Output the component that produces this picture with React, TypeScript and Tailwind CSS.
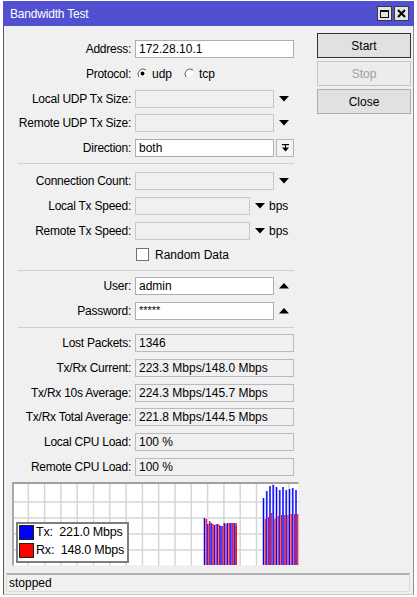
import React from "react";

const Down = () => (
  <svg width="10" height="6" viewBox="0 0 10 6" className="block">
    <path d="M0 0H10L5 5.5Z" fill="#000" />
  </svg>
);
const Up = () => (
  <svg width="10" height="6" viewBox="0 0 10 6" className="block">
    <path d="M0 5.5H10L5 0Z" fill="#000" />
  </svg>
);

const Radio = ({ checked }: { checked?: boolean }) => (
  <svg width="11" height="11" viewBox="0 0 11 11" className="block">
    <circle cx="5.5" cy="5.5" r="5" fill="#fff" />
    <path d="M9 2 A5 5 0 0 0 2 9" fill="none" stroke="#5a5a5a" strokeWidth="1" />
    <path d="M2 9 A5 5 0 0 0 9 2" fill="none" stroke="#e4e4e4" strokeWidth="1" />
    {checked && <circle cx="5.5" cy="5.5" r="2" fill="#000" />}
  </svg>
);

function Row({ label, children }: { label: string; children: React.ReactNode }) {
  return (
    <div className="flex items-center h-[18px]">
      <div className="w-[127px] text-right whitespace-nowrap tracking-[-0.25px]">{label}</div>
      <div className="ml-[4px] flex items-center h-[18px]">{children}</div>
    </div>
  );
}

const white = "h-[18px] bg-white border border-[#abadb3] pl-[3px] flex items-center";
const disabled = "h-[18px] bg-[#f0f0f0] border border-[#c9c9c9]";
const stat = "h-[18px] w-[159px] bg-[#f0f0f0] border border-[#bababa] pl-[3px] flex items-center";

const Sep = ({ cls }: { cls: string }) => (
  <div className={"ml-[14px] w-[276px] h-px bg-[#cdcdcd] " + cls} />
);

const c1Blue = [518, 524, 523, 525, 524, 526, 523, 523, 523, 523];
const c1Red = [519, 521, 524, 524, 525, 526, 524, 523, 523, 523];
const c2Blue = [498, 491, 486, 485, 487, 490, 487, 490, 489, 488, 490];
const c2Red = [519, 517, 513, 519, 516, 515, 515, 515, 514, 514, 514];

function Graph() {
  const vlines: number[] = [];
  for (let k = 1; k <= 17; k++) vlines.push(12 + 16.3 * k);
  const hlines = [502, 518, 534, 550];
  const bottom = 565;
  const bars: React.ReactNode[] = [];
  const addPair = (x: number, bt: number, rt: number, key: string) => {
    bars.push(<rect key={key + "bl"} x={x - 0.5} y={bt} width={2} height={bottom - bt} fill="#8080ff" />);
    bars.push(<rect key={key + "b"} x={x} y={bt} width={1} height={bottom - bt} fill="#0000ff" />);
    bars.push(<rect key={key + "rl"} x={x + 1.5} y={rt} width={1.8} height={bottom - rt} fill="#ff8080" />);
    bars.push(<rect key={key + "r"} x={x + 1.8} y={rt} width={1} height={bottom - rt} fill="#ff0000" />);
  };
  c1Blue.forEach((b, i) => addPair(204 + 3.3 * i, b, c1Red[i], "a" + i));
  bars.push(<rect key="lastred" x={235.5} y={526} width={1.2} height={bottom - 526} fill="#ff0000" />);
  c2Blue.forEach((b, i) => addPair(263 + 3.25 * i, b, c2Red[i], "c" + i));
  return (
    <div className="relative ml-[8px] mt-[6px] w-[288px] h-[85px]">
      <svg width="288" height="85" viewBox="0 0 288 85" className="block">
        <g transform="translate(-12,-482)">
          <rect x="12" y="482" width="288" height="85" fill="#fff" />
          {vlines.map((x, i) => (
            <line key={"v" + i} x1={x} y1={482} x2={x} y2={566} stroke="#d6d6d6" strokeWidth="1.5" />
          ))}
          {hlines.map((y, i) => (
            <line key={"h" + i} x1={12} y1={y} x2={300} y2={y} stroke="#d6d6d6" strokeWidth="1.5" />
          ))}
          {bars}
          <rect x="12" y="482" width="288" height="2" fill="#a0a0a0" />
          <rect x="12" y="482" width="2" height="85" fill="#a9a9a9" />
          <rect x="12" y="565.5" width="288" height="1.5" fill="#ececec" />
          <rect x="298.5" y="482" width="1.5" height="85" fill="#ececec" />
        </g>
      </svg>
      <div className="absolute left-[4px] top-[40px] w-[113px] h-[41px] bg-white border-2 border-[#7e7e7e] flex flex-col pl-px pt-px gap-[3px] text-[12.5px] tracking-[-0.2px]">
        <div className="flex items-center h-[15px]">
          <div className="w-[15px] h-[15px] bg-[#0000ff] border border-[#202020]" />
          <span className="ml-[2px] whitespace-pre">Tx:  221.0 Mbps</span>
        </div>
        <div className="flex items-center h-[15px]">
          <div className="w-[15px] h-[15px] bg-[#ff0000] border border-[#202020]" />
          <span className="ml-[2px] whitespace-pre">Rx:  148.0 Mbps</span>
        </div>
      </div>
    </div>
  );
}

export default function App() {
  return (
    <div className="w-[417px] h-[597px] bg-white pt-[1px] pl-[3px] font-['Liberation_Sans',Arial,sans-serif] text-[12px] text-black leading-none">
      <div className="w-[411px] h-[594px] flex flex-col bg-[#f0f0f0]">
        {/* Title bar */}
        <div className="h-[25px] bg-[#5050d0] flex items-center pl-[7px] pr-[5px]">
          <span className="text-white text-[12px] tracking-[-0.2px]">Bandwidth Test</span>
          <div className="ml-auto flex gap-[2px]">
            <div className="w-[15px] h-[15px] bg-[#e4e4e4] border border-[#3a3a3a] flex items-center justify-center">
              <div className="w-[9px] h-[8px] border border-[#111] border-t-2" />
            </div>
            <div className="w-[15px] h-[15px] bg-[#e4e4e4] border border-[#3a3a3a] flex items-center justify-center">
              <svg width="9" height="9" viewBox="0 0 9 9" className="block">
                <path d="M1 1L8 8M8 1L1 8" stroke="#000" strokeWidth="2" />
              </svg>
            </div>
          </div>
        </div>
        {/* Body */}
        <div className="flex-1 flex flex-col border-l border-r border-b border-l-[#5a5a5a] border-r-[#8f8f8f] border-b-[#c8c8c8]">
          <div className="flex">
            {/* Left form */}
            <div className="w-[300px] pt-[14px] flex flex-col">
              <div className="flex flex-col gap-[6.75px]">
                <Row label="Address:">
                  <div className={white + " w-[159px]"}>172.28.10.1</div>
                </Row>
                <Row label="Protocol:">
                  <div className="flex items-center ml-[2px]">
                    <Radio checked />
                    <span className="ml-[4px]">udp</span>
                    <span className="ml-[12px]"><Radio /></span>
                    <span className="ml-[4px]">tcp</span>
                  </div>
                </Row>
                <Row label="Local UDP Tx Size:">
                  <div className={disabled + " w-[139px]"} />
                  <div className="ml-[5px]"><Down /></div>
                </Row>
                <Row label="Remote UDP Tx Size:">
                  <div className={disabled + " w-[139px]"} />
                  <div className="ml-[5px]"><Down /></div>
                </Row>
                <Row label="Direction:">
                  <div className={white + " w-[139px]"}>both</div>
                  <div className="ml-[2px] w-[18px] h-[18px] border border-[#b5b5b5] bg-[#f4f4f4] flex items-center justify-center">
                    <svg width="7" height="8" viewBox="0 0 7 8" className="block">
                      <rect x="0" y="0" width="7" height="1.2" fill="#000" />
                      <rect x="3" y="1" width="1" height="3" fill="#000" />
                      <path d="M0 3.5H7L3.5 7.5Z" fill="#000" />
                    </svg>
                  </div>
                </Row>
              </div>
              <Sep cls="mt-[6px] mb-[8px]" />
              <div className="flex flex-col gap-[6.75px]">
                <Row label="Connection Count:">
                  <div className={disabled + " w-[139px]"} />
                  <div className="ml-[5px]"><Down /></div>
                </Row>
                <Row label="Local Tx Speed:">
                  <div className={disabled + " w-[115px]"} />
                  <div className="ml-[5px]"><Down /></div>
                  <span className="ml-[4px]">bps</span>
                </Row>
                <Row label="Remote Tx Speed:">
                  <div className={disabled + " w-[115px]"} />
                  <div className="ml-[5px]"><Down /></div>
                  <span className="ml-[4px]">bps</span>
                </Row>
                <div className="flex items-center h-[17px] pl-[132px]">
                  <div className="w-[13px] h-[13px] bg-white border border-[#707070]" />
                  <span className="ml-[6px]">Random Data</span>
                </div>
              </div>
              <Sep cls="mt-[7px] mb-[6px]" />
              <div className="flex flex-col gap-[6.75px]">
                <Row label="User:">
                  <div className={white + " w-[139px]"}>admin</div>
                  <div className="ml-[5px]"><Up /></div>
                </Row>
                <Row label="Password:">
                  <div className={white + " w-[139px] items-start pt-[2px] text-[11px]"}>*****</div>
                  <div className="ml-[5px]"><Up /></div>
                </Row>
              </div>
              <Sep cls="mt-[7px] mb-[6px]" />
              <div className="flex flex-col gap-[6.75px]">
                <Row label="Lost Packets:"><div className={stat}>1346</div></Row>
                <Row label="Tx/Rx Current:"><div className={stat}>223.3 Mbps/148.0 Mbps</div></Row>
                <Row label="Tx/Rx 10s Average:"><div className={stat}>224.3 Mbps/145.7 Mbps</div></Row>
                <Row label="Tx/Rx Total Average:"><div className={stat}>221.8 Mbps/144.5 Mbps</div></Row>
                <Row label="Local CPU Load:"><div className={stat}>100 %</div></Row>
                <Row label="Remote CPU Load:"><div className={stat}>100 %</div></Row>
              </div>
              <Graph />
            </div>
            {/* Buttons */}
            <div className="pl-[13px] pt-[7px] flex flex-col gap-[3px]">
              <div className="w-[94px] h-[25px] bg-[#e1e1e1] border border-[#333] flex items-center justify-center">Start</div>
              <div className="w-[94px] h-[25px] bg-[#ececec] border border-[#c4c4c4] text-[#a0a0a0] flex items-center justify-center">Stop</div>
              <div className="w-[94px] h-[25px] bg-[#e1e1e1] border border-[#adadad] flex items-center justify-center">Close</div>
            </div>
          </div>
          <div className="mt-[6px] ml-[2px] w-[404px] h-[19px] border border-[#dcdcdc] border-t-2 border-t-[#b0b0b0] flex items-center pl-[2px]">
            stopped
          </div>
        </div>
      </div>
    </div>
  );
}
